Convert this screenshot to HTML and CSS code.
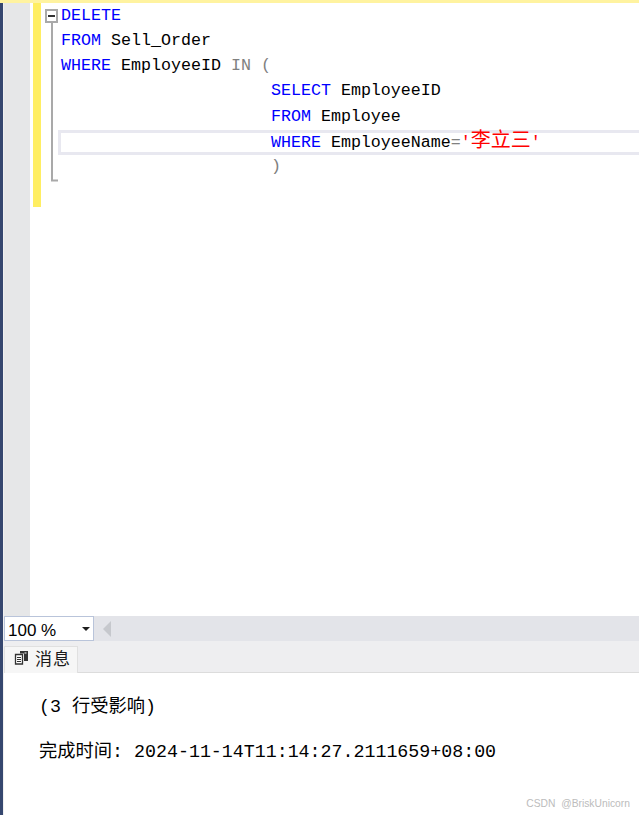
FILE: index.html
```html
<!DOCTYPE html>
<html lang="zh">
<head>
<meta charset="utf-8">
<title>SQL</title>
<link rel="stylesheet" href="styles.css">
</head>
<body>
<div class="topband"></div>
<div class="shell">
  <div class="strip"></div>
  <div class="main">
    <div class="editor">
      <div class="gutter"></div>
      <div class="margin"><div class="changebar"></div></div>
      <div class="code">
        <svg class="fold" width="16" height="176" viewBox="0 0 16 176" aria-hidden="true">
          <rect x="1" y="1" width="11" height="12" fill="#fff" stroke="#a9a9a9" stroke-width="2"/>
          <rect x="3" y="6" width="7" height="2" fill="#333"/>
          <path d="M7 14V171.500H13" fill="none" stroke="#a9a9a9" stroke-width="2"/>
        </svg>
        <div class="line"><span class="kw">DELETE</span></div>
        <div class="line"><span class="kw">FROM</span> Sell_Order</div>
        <div class="line"><span class="kw">WHERE</span> EmployeeID <span class="op">IN</span> <span class="op">(</span></div>
        <div class="line">                     <span class="kw">SELECT</span> EmployeeID</div>
        <div class="line">                     <span class="kw">FROM</span> Employee</div>
        <div class="line current">                     <span class="kw">WHERE</span> EmployeeName<span class="op">=</span><span class="str">'<span class="cjk">李立三</span>'</span></div>
        <div class="line">                     <span class="op">)</span></div>
      </div>
    </div>
    <div class="statusbar">
      <div class="zoombox"><span>100 %</span><span class="caret"></span></div>
      <div class="arrow-left"></div>
    </div>
    <div class="tabs">
      <div class="tab">
        <svg class="tab-icon" width="15" height="15" viewBox="0 0 15 15" aria-hidden="true">
          <path d="M1.500 4.500H8.500V14H1.500Z" fill="#fff" stroke="#333" stroke-width="1.300"/>
          <path d="M3 7.500H7M3 9.500H7M3 11.500H7" stroke="#333" stroke-width="1"/>
          <path d="M6 1H14V11H10V3.500H6Z" fill="#333"/>
          <rect x="10.500" y="2.500" width="2" height="1" fill="#fff"/>
        </svg>
        <span class="tab-label">消息</span>
      </div>
    </div>
    <div class="output">
      <p class="row">(3 行受影响)</p>
      <p class="row done">完成时间: 2024-11-14T11:14:27.2111659+08:00</p>
      <span class="watermark">CSDN  @BriskUnicorn</span>
    </div>
  </div>
</div>
</body>
</html>
```

FILE: styles.css
```css
* { box-sizing: border-box; }
html, body { margin: 0; padding: 0; }
body {
  width: 639px;
  height: 815px;
  overflow: hidden;
  display: flex;
  flex-direction: column;
  background: #fff;
  font-family: "Liberation Mono", "Noto Sans CJK SC", monospace;
}
.topband { height: 3px; background: #fff3a0; flex: none; }
.shell { flex: 1; display: flex; min-height: 0; }
.strip { width: 3px; background: #36476f; flex: none; }
.main { flex: 1; display: flex; flex-direction: column; min-width: 0; border-left: 1px solid #f0f0f0; }

.editor { height: 613px; display: flex; flex: none; }
.gutter { width: 26px; background: #e6e7e8; flex: none; }
.margin { width: 31px; padding-left: 3px; flex: none; }
.changebar { width: 8px; height: 204px; background: #ffee62; }
.code {
  position: relative;
  flex: 1;
  min-width: 0;
  font-size: 16.67px;
  line-height: 25.17px;
  color: #000;
}
.fold { position: absolute; left: -16px; top: 6px; }
.line { height: 25.17px; white-space: pre; }
.line.current { position: relative; }
.line.current::before {
  content: "";
  position: absolute;
  left: -3px; right: 0; top: 1px; bottom: -1px;
  border: 3px solid #e8e8f0;
  border-right: 0;
}
.kw { color: #0000ff; }
.op { color: #808080; }
.str { color: #ff0000; position: relative; }
.cjk { font-size: 20px; }

.statusbar {
  height: 25px;
  flex: none;
  display: flex;
  align-items: center;
  background: #e3e4e9;
}
.zoombox {
  width: 90px;
  height: 25px;
  display: flex;
  align-items: center;
  justify-content: space-between;
  padding: 5px 3px 0 3px;
  background: #fff;
  border: 1px solid #b9c4da;
  font-family: "Liberation Sans", sans-serif;
  font-size: 17px;
}
.caret {
  width: 0; height: 0;
  margin-top: -5px;
  border-left: 4.500px solid transparent;
  border-right: 4.500px solid transparent;
  border-top: 4.500px solid #1e1e1e;
}
.arrow-left {
  width: 0; height: 0;
  margin-left: 9px;
  border-top: 8px solid transparent;
  border-bottom: 8px solid transparent;
  border-right: 8px solid #c6c8cd;
}

.tabs {
  height: 32px;
  flex: none;
  padding-top: 5px;
  background: #eeeef0;
  border-bottom: 1px solid #dcdcdc;
  display: flex;
}
.tab {
  width: 74px;
  height: 27px;
  display: flex;
  align-items: center;
  gap: 6px;
  padding-left: 9px;
  padding-bottom: 5px;
  background: #f6f6f6;
  border: 1px solid #e0e0e0;
  border-bottom: 0;
}
.tab-label {
  font-family: "Noto Sans CJK SC", sans-serif;
  font-size: 17px;
  line-height: 20px;
  letter-spacing: 1px;
  color: #1a1a1a;
}

.output {
  position: relative;
  flex: 1;
  padding: 23px 0 0 35px;
  font-size: 18.3px;
  line-height: 22px;
  color: #000;
}
.row { margin: 0; white-space: pre; }
.done { margin-top: 23px; }
.watermark {
  position: absolute;
  right: 9px;
  bottom: 3px;
  font-family: "Liberation Sans", sans-serif;
  font-size: 10.300px;
  line-height: 16px;
  white-space: pre;
  color: #bcbcbc;
}
```
